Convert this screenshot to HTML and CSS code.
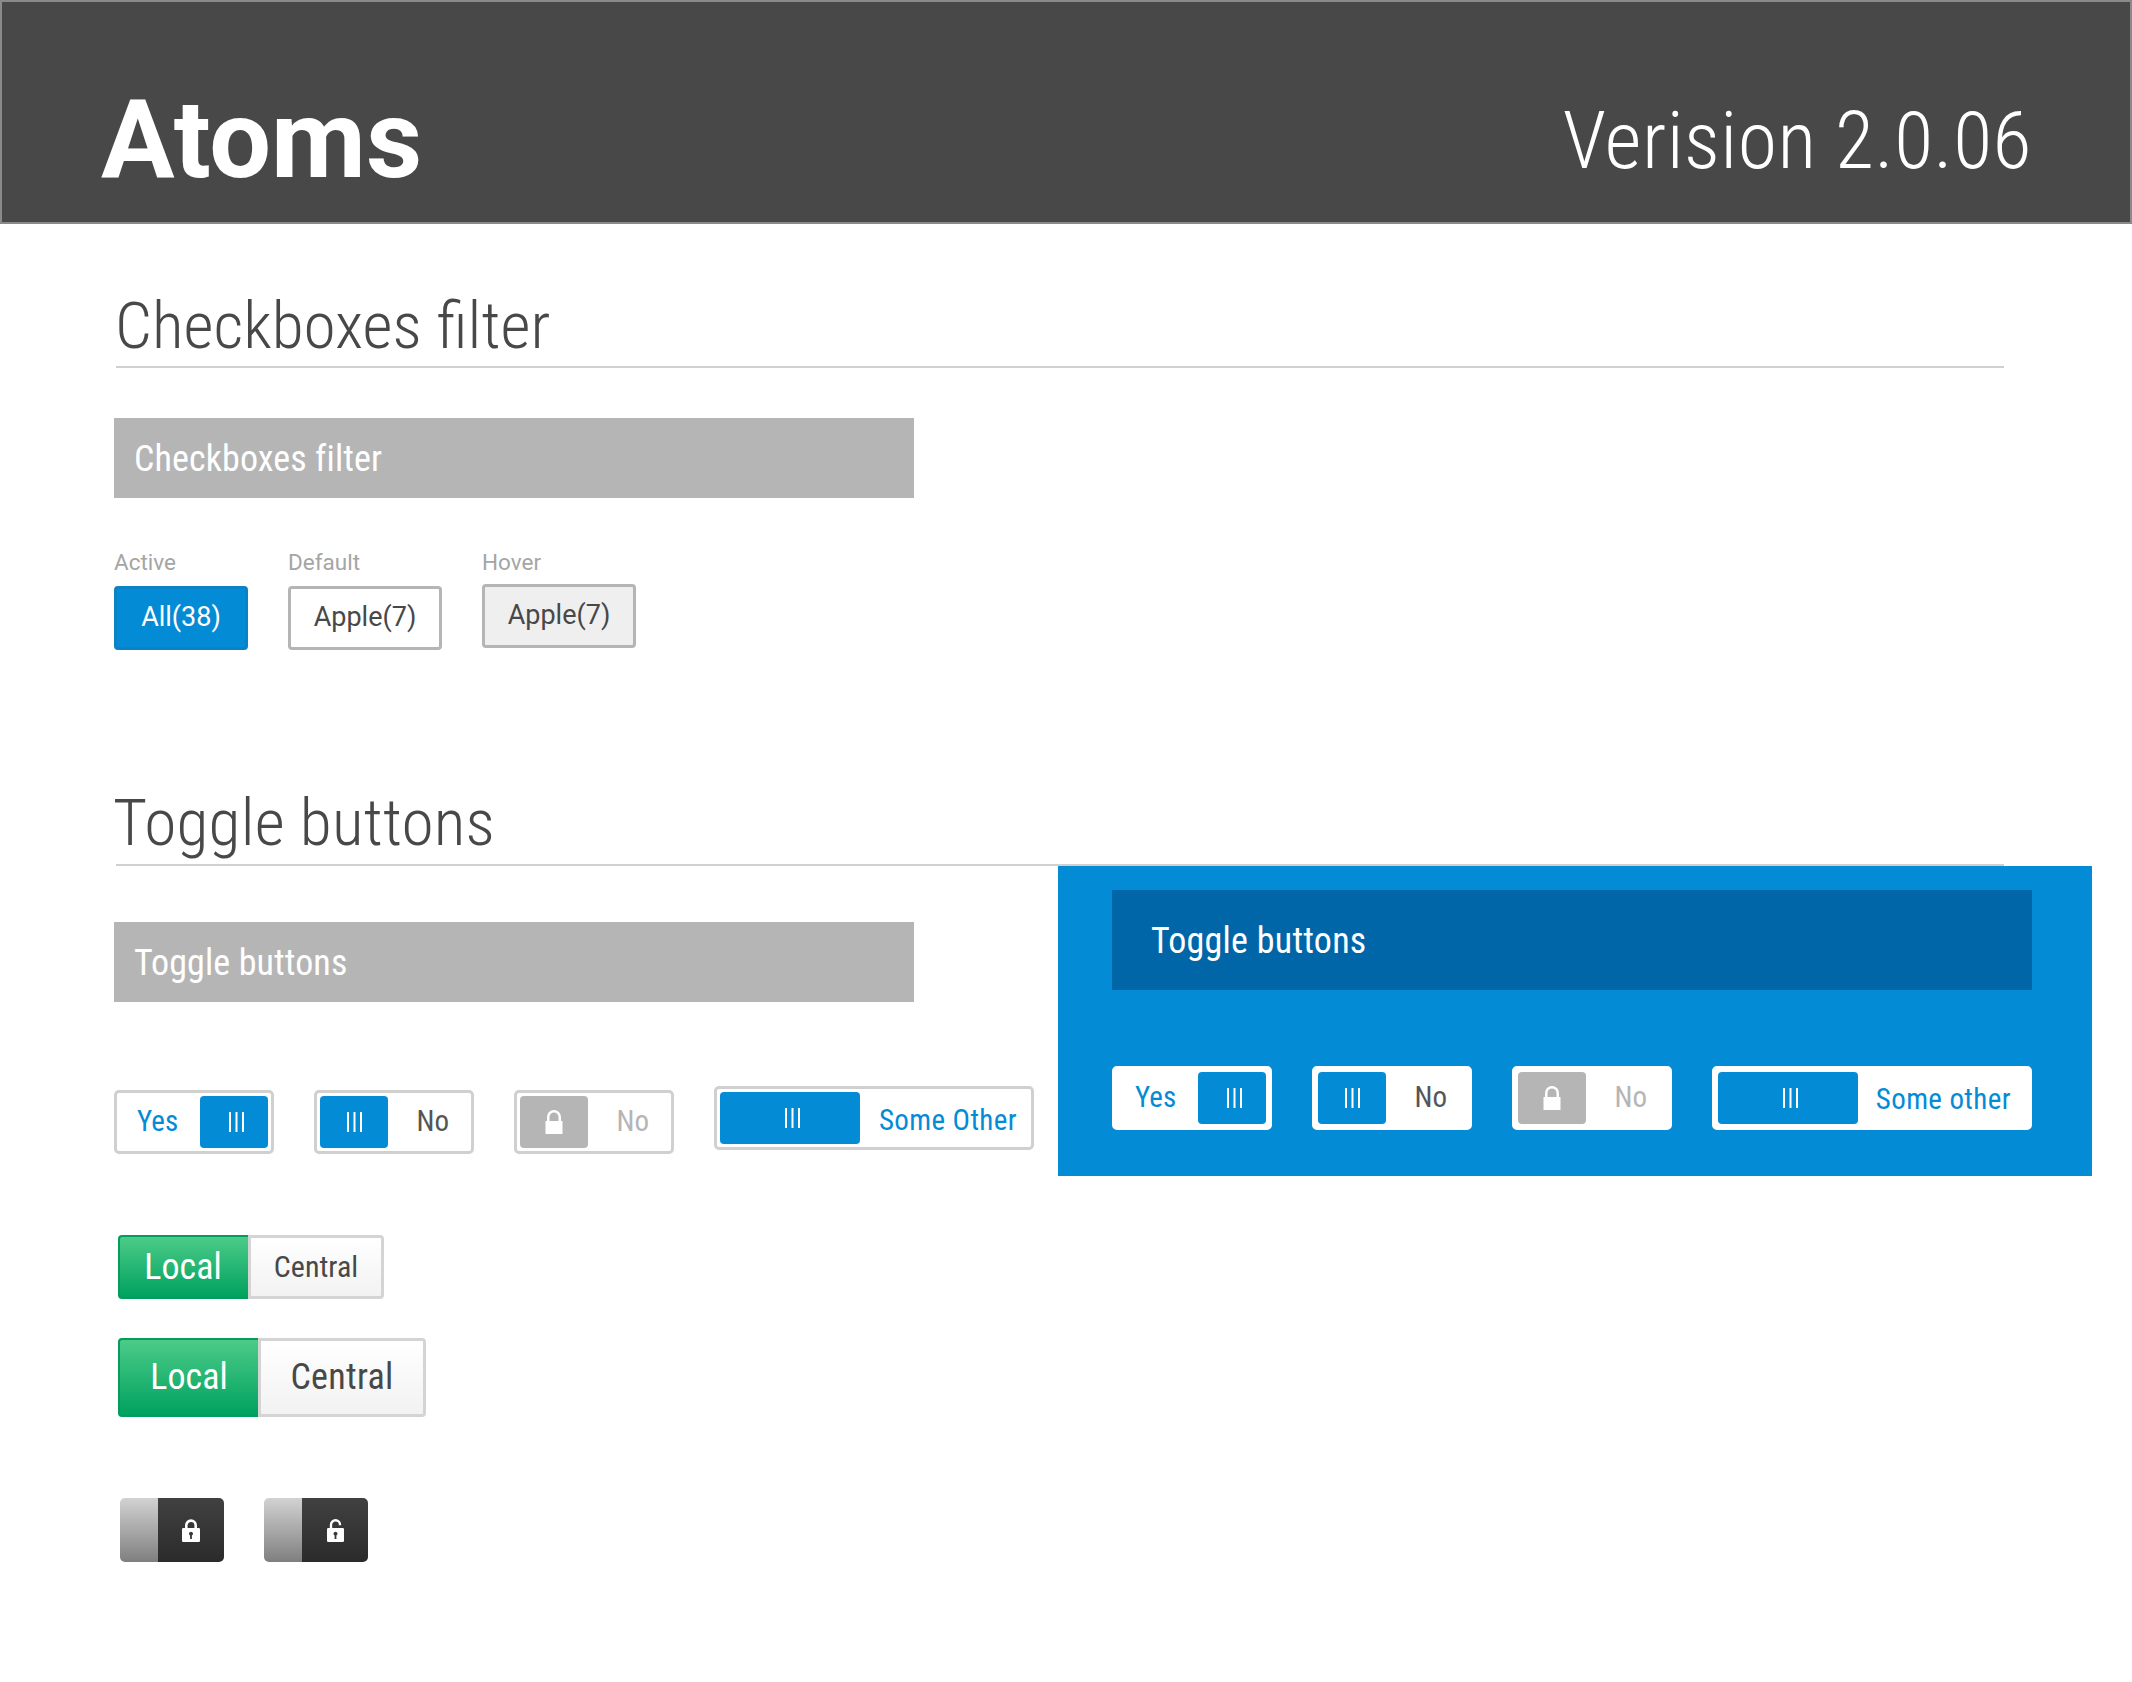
FILE: index.html
```html
<!DOCTYPE html>
<html lang="en">
<head>
<meta charset="utf-8">
<title>Atoms</title>
<link rel="stylesheet" href="styles.css">
</head>
<body>
<svg class="defs" width="0" height="0" aria-hidden="true">
  <symbol id="bars" viewBox="0 0 17 20"><path d="M1 0h2v20H1zM7.500 0h2v20h-2zM14 0h2v20h-2z"/></symbol>
  <symbol id="lock-plain" viewBox="0 0 18 24"><path fill-rule="evenodd" d="M2 11V7a7 7 0 0 1 14 0v4h1.500v13H.5V11zm2.500 0h9V7a4.500 4.500 0 0 0-9 0z"/></symbol>
  <symbol id="lock-closed" viewBox="0 0 18 23">
    <path d="M4.300 10V6.300a4.700 4.700 0 0 1 9.400 0V10" fill="none" stroke="#fff" stroke-width="2.600"/>
    <rect y="9" width="18" height="14" rx="1.200" fill="#fff"/>
    <path d="M9 12.800a2 2 0 0 1 .9 3.800V20H8.100v-3.400A2 2 0 0 1 9 12.800z" fill="#383838"/>
  </symbol>
  <symbol id="lock-open" viewBox="0 0 17 23">
    <path d="M4 10V5.800a4.500 4.500 0 0 1 9 0V6.200" fill="none" stroke="#fff" stroke-width="2.400"/>
    <rect y="9" width="17" height="14" rx="1.200" fill="#fff"/>
    <path d="M8.500 12.800a2 2 0 0 1 .9 3.800V20H7.600v-3.400a2 2 0 0 1 .9-3.800z" fill="#383838"/>
  </symbol>
</svg>

<header class="top">
  <h1 class="top-title">Atoms</h1>
  <p class="top-version">Verision 2.0.06</p>
</header>

<main class="page">
  <section class="filters">
    <h2 class="heading">Checkboxes filter</h2>
    <div class="bar">Checkboxes filter</div>
    <div class="chips">
      <div class="chip-col">
        <span class="chip-label">Active</span>
        <span class="chip chip-active">All(38)</span>
      </div>
      <div class="chip-col">
        <span class="chip-label">Default</span>
        <span class="chip">Apple(7)</span>
      </div>
      <div class="chip-col">
        <span class="chip-label">Hover</span>
        <span class="chip chip-hover">Apple(7)</span>
      </div>
    </div>
  </section>

  <section class="toggles">
    <h2 class="heading heading-toggle">Toggle buttons</h2>
    <div class="toggle-body">
      <div class="toggle-left">
        <div class="bar">Toggle buttons</div>
        <div class="switches">
          <div class="switch">
            <span class="sw-text sw-blue sw-yes">Yes</span>
            <span class="knob knob-shift"><svg class="ico-bars"><use href="#bars"/></svg></span>
          </div>
          <div class="switch">
            <span class="knob"><svg class="ico-bars"><use href="#bars"/></svg></span>
            <span class="sw-text sw-dark sw-no">No</span>
          </div>
          <div class="switch">
            <span class="knob knob-off"><svg class="ico-lock"><use href="#lock-plain"/></svg></span>
            <span class="sw-text sw-off sw-no">No</span>
          </div>
          <div class="switch switch-wide switch-raised">
            <span class="knob knob-wide knob-shift"><svg class="ico-bars"><use href="#bars"/></svg></span>
            <span class="sw-text sw-blue sw-other">Some Other</span>
          </div>
        </div>
        <div class="seg seg-small">
          <span class="seg-on">Local</span>
          <span class="seg-off">Central</span>
        </div>
        <div class="seg seg-large">
          <span class="seg-on">Local</span>
          <span class="seg-off">Central</span>
        </div>
        <div class="locks">
          <div class="lock-toggle">
            <span class="lock-grey"></span>
            <span class="lock-dark"><svg class="ico-closed"><use href="#lock-closed"/></svg></span>
          </div>
          <div class="lock-toggle">
            <span class="lock-grey"></span>
            <span class="lock-dark"><svg class="ico-open"><use href="#lock-open"/></svg></span>
          </div>
        </div>
      </div>

      <div class="panel">
        <div class="panel-bar">Toggle buttons</div>
        <div class="panel-switches">
          <div class="switch switch-inv">
            <span class="sw-text sw-blue sw-yes">Yes</span>
            <span class="knob knob-shift"><svg class="ico-bars"><use href="#bars"/></svg></span>
          </div>
          <div class="switch switch-inv">
            <span class="knob"><svg class="ico-bars"><use href="#bars"/></svg></span>
            <span class="sw-text sw-dark sw-no">No</span>
          </div>
          <div class="switch switch-inv">
            <span class="knob knob-off"><svg class="ico-lock"><use href="#lock-plain"/></svg></span>
            <span class="sw-text sw-off sw-no">No</span>
          </div>
          <div class="switch switch-inv switch-wide">
            <span class="knob knob-wide knob-shift"><svg class="ico-bars"><use href="#bars"/></svg></span>
            <span class="sw-text sw-blue sw-other">Some other</span>
          </div>
        </div>
      </div>
    </div>
  </section>
</main>
</body>
</html>
```
FILE: styles.css
```css
* { box-sizing: border-box; }
html, body { margin: 0; padding: 0; background: #fff; }
body {
  width: 2132px;
  height: 1682px;
  overflow: hidden;
  font-family: Roboto, "Noto Sans", sans-serif;
  color: #484848;
}
.defs { position: absolute; }

/* Header */
.top {
  height: 224px;
  background: #484848;
  border: 2px solid #8a8a8a;
  padding: 84px 98px 0 99px;
  display: flex;
  justify-content: space-between;
  align-items: flex-start;
  color: #fff;
}
.top-title { margin: 0; font-size: 109.500px; line-height: 108px; font-weight: 700; }
.top-version {
  margin: 0;
  padding-top: 15px;
  font-size: 80px;
  line-height: 80px;
  font-weight: 300;
  font-stretch: 75%;
  letter-spacing: 0.5px;
}

.page { padding-left: 114px; }

.heading {
  margin: 0 0 0 2px;
  width: 1888px;
  height: 144px;
  padding-top: 64px;
  text-indent: -1px;
  font-size: 65.500px;
  line-height: 76px;
  font-weight: 300;
  font-stretch: 75%;
  border-bottom: 2px solid #d0d0d0;
}
.heading-toggle { padding-top: 63px; text-indent: -3px; letter-spacing: 0.2px; }

.bar {
  width: 800px;
  height: 80px;
  margin-top: 50px;
  padding-left: 20px;
  background: #b5b5b5;
  color: #fff;
  font-size: 36px;
  font-stretch: 75%;
  letter-spacing: 0.1px;
  line-height: 82px;
}

/* Filter chips */
.chips { display: flex; gap: 40px; margin-top: 50px; }
.chip-col { display: flex; flex-direction: column; align-items: flex-start; gap: 10px; }
.chip-label { font-size: 22.500px; line-height: 28px; color: #a5a5a5; }
.chip {
  width: 154px;
  height: 64px;
  padding-bottom: 2px;
  border: 3px solid #b5b5b5;
  border-radius: 4px;
  background: #fff;
  display: flex;
  align-items: center;
  justify-content: center;
  font-size: 27px;
}
.chip-active { width: 134px; background: #048bd6; border-color: #0a82c6; color: #fff; }
.chip-hover { margin-top: -2px; background: #efefef; }

/* Toggle section */
.toggles { margin-top: 72px; }
.toggle-body { display: flex; }
.toggle-left { width: 944px; flex: none; }
.toggle-left .bar { margin-top: 56px; }
.switches { display: flex; gap: 40px; margin-top: 88px; }
.switch {
  width: 160px;
  height: 64px;
  padding: 3px;
  border: 3px solid #d0d0d0;
  border-radius: 5px;
  background: #fff;
  display: flex;
  align-items: stretch;
  justify-content: space-between;
}
.switch-wide { width: 320px; }
.switch-raised { margin-top: -4px; }
.switch-inv { border-color: #fff; }

.knob {
  width: 68px;
  flex: none;
  background: #048bd6;
  border-radius: 4px;
  display: flex;
  align-items: center;
  justify-content: center;
}
.knob-off { background: #b5b5b5; }
.knob-wide { width: 140px; }
.knob-shift { padding-left: 4px; }
.ico-bars { width: 17px; height: 20px; fill: #fff; }
.ico-lock { width: 18px; height: 24px; fill: #fff; }

.sw-text { font-size: 29px; line-height: 50px; font-stretch: 75%; }
.sw-yes { padding-left: 17px; }
.sw-no { padding-right: 19px; }
.sw-other { padding: 2px 11px 0 0; line-height: 52px; letter-spacing: 0.4px; }
.switch-inv .sw-other { padding: 1px 15px 0 0; }
.sw-blue { color: #048bd6; }
.sw-dark { color: #555; }
.sw-off { color: #b5b5b5; }

/* Segmented */
.seg { display: flex; margin-left: 4px; width: max-content; }
.seg-small { margin-top: 81px; height: 64px; }
.seg-large { margin-top: 39px; height: 79px; }
.seg-on, .seg-off { display: flex; align-items: center; justify-content: center; font-stretch: 75%; }
.seg-on {
  color: #fff;
  background: linear-gradient(#4ccb88, #00a15f);
  border: 2px solid #049c5d;
  border-right: 0;
  border-radius: 4px 0 0 4px;
}
.seg-off {
  background: linear-gradient(#fff, #f2f2f2);
  border: 3px solid #d4d4d4;
  border-radius: 0 4px 4px 0;
}
.seg-small .seg-on { width: 130px; font-size: 36px; padding: 0 2px 1px 0; }
.seg-small .seg-off { width: 136px; font-size: 30px; padding-bottom: 1px; }
.seg-large .seg-on { width: 140px; font-size: 36px; padding-bottom: 1px; }
.seg-large .seg-off { width: 168px; font-size: 36px; letter-spacing: 0.3px; padding-bottom: 1px; }

/* Locks */
.locks { display: flex; gap: 40px; margin: 81px 0 0 6px; }
.lock-toggle { width: 104px; height: 64px; display: flex; border-radius: 5px; overflow: hidden; }
.lock-grey { width: 38px; background: linear-gradient(#d2d2d2, #7f7f7f); }
.lock-dark {
  flex: 1;
  background: linear-gradient(#414141, #2b2b2b);
  display: flex;
  align-items: center;
  justify-content: center;
}
.ico-closed { width: 18px; height: 23px; }
.ico-open { width: 17px; height: 23px; }

/* Blue panel */
.panel {
  width: 1034px;
  height: 310px;
  background: #048bd6;
  padding: 24px 0 0 54px;
}
.panel-bar {
  width: 920px;
  height: 100px;
  padding-left: 39px;
  background: #0066a8;
  color: #fff;
  font-size: 36px;
  font-stretch: 75%;
  letter-spacing: 0.25px;
  line-height: 102px;
}
.panel-switches { display: flex; gap: 40px; margin-top: 76px; }
```
